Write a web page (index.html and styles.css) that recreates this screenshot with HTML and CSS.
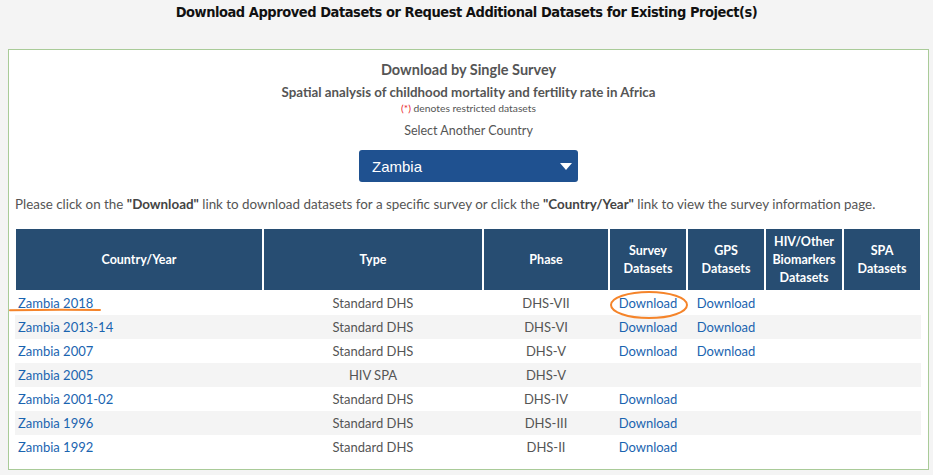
FILE: index.html
```html
<!DOCTYPE html>
<html>
<head>
<meta charset="utf-8">
<link rel="stylesheet" href="styles.css">
</head>
<body>
<h1 class="page-title">Download Approved Datasets or Request Additional Datasets for Existing Project(s)</h1>
<div class="panel">
  <h2 class="panel-title">Download by Single Survey</h2>
  <h3 class="project-title">Spatial analysis of childhood mortality and fertility rate in Africa</h3>
  <p class="restricted"><span class="star">(*)</span> denotes restricted datasets</p>
  <p class="select-label">Select Another Country</p>
  <div class="select-row">
    <div class="country-select">
      <span>Zambia</span>
      <svg class="caret" width="12" height="7" viewBox="0 0 12 7"><path d="M0 0H12L6 7Z" fill="#fff"/></svg>
    </div>
  </div>
  <p class="instructions">Please click on the <b>"Download"</b> link to download datasets for a specific survey or click the <b>"Country/Year"</b> link to view the survey information page.</p>
  <div class="table-wrap">
    <table class="surveys">
      <colgroup>
        <col class="c-country"><col class="c-type"><col class="c-phase"><col class="c-ds"><col class="c-ds"><col class="c-ds"><col class="c-ds">
      </colgroup>
      <thead>
        <tr>
          <th>Country/Year</th><th>Type</th><th>Phase</th><th>Survey<br>Datasets</th><th>GPS<br>Datasets</th><th>HIV/Other<br>Biomarkers<br>Datasets</th><th>SPA<br>Datasets</th>
        </tr>
      </thead>
      <tbody>
        <tr><td class="cy"><a>Zambia 2018</a></td><td>Standard DHS</td><td>DHS-VII</td><td><a>Download</a></td><td><a>Download</a></td><td></td><td></td></tr>
        <tr><td class="cy"><a>Zambia 2013-14</a></td><td>Standard DHS</td><td>DHS-VI</td><td><a>Download</a></td><td><a>Download</a></td><td></td><td></td></tr>
        <tr><td class="cy"><a>Zambia 2007</a></td><td>Standard DHS</td><td>DHS-V</td><td><a>Download</a></td><td><a>Download</a></td><td></td><td></td></tr>
        <tr><td class="cy"><a>Zambia 2005</a></td><td>HIV SPA</td><td>DHS-V</td><td></td><td></td><td></td><td></td></tr>
        <tr><td class="cy"><a>Zambia 2001-02</a></td><td>Standard DHS</td><td>DHS-IV</td><td><a>Download</a></td><td></td><td></td><td></td></tr>
        <tr><td class="cy"><a>Zambia 1996</a></td><td>Standard DHS</td><td>DHS-III</td><td><a>Download</a></td><td></td><td></td><td></td></tr>
        <tr><td class="cy"><a>Zambia 1992</a></td><td>Standard DHS</td><td>DHS-II</td><td><a>Download</a></td><td></td><td></td><td></td></tr>
      </tbody>
    </table>
    <svg class="mark mark-underline" width="92" height="4" viewBox="0 0 92 4"><path d="M1 2.2 Q46 1.4 91 2" stroke="#f5842a" stroke-width="2" fill="none" stroke-linecap="round"/></svg>
    <svg class="mark mark-ellipse" width="80" height="30" viewBox="0 0 80 30"><ellipse cx="40" cy="15" rx="38" ry="13" stroke="#f5842a" stroke-width="2" fill="none"/></svg>
  </div>
</div>
</body>
</html>
```

FILE: styles.css
```css
html, body {
  margin: 0;
  padding: 0;
  background: #f4f4f4;
}
body {
  font-family: Lato, "Open Sans", sans-serif;
  color: #555;
  width: 933px;
  height: 475px;
  overflow: hidden;
}
.page-title {
  margin: 0;
  padding-top: 3px;
  height: 46px;
  box-sizing: border-box;
  text-align: center;
  font-family: "DejaVu Sans Condensed", "DejaVu Sans", sans-serif;
  font-weight: bold;
  font-size: 14.5px;
  line-height: 18px;
  color: #111;
  letter-spacing: -0.45px;
}
.panel {
  margin: 3px 0 0 8px;
  width: 921px;
  height: 421px;
  box-sizing: border-box;
  border: 1px solid #a9cb98;
  background: #fff;
  padding: 11px 6px 0 6px;
  display: flex;
  flex-direction: column;
  align-items: stretch;
}
.panel-title {
  margin: 0;
  text-align: center;
  font-size: 14.5px;
  line-height: 18px;
  font-weight: bold;
  color: #555;
}
.project-title {
  margin: 5px 0 0;
  text-align: center;
  font-size: 13.3px;
  line-height: 16px;
  font-weight: bold;
  color: #555;
}
.restricted {
  margin: 1px 0 0;
  text-align: center;
  font-size: 10.3px;
  line-height: 14px;
  color: #555;
}
.star { color: #e8262e; }
.select-label {
  margin: 8px 0 0;
  text-align: center;
  font-size: 12.5px;
  line-height: 16px;
  color: #555;
}
.select-row {
  margin-top: 11px;
  display: flex;
  justify-content: center;
}
.country-select {
  width: 219px;
  height: 32px;
  box-sizing: border-box;
  background: #1f5190;
  border-radius: 3px;
  display: flex;
  align-items: center;
  justify-content: space-between;
  padding: 0 6px 0 13px;
  color: #fff;
  font-family: "Liberation Sans", Arial, sans-serif;
  font-size: 15px;
}
.caret { display: block; }
.instructions {
  margin: 13px 0 0;
  padding-left: 0;
  font-size: 13.4px;
  line-height: 18px;
  color: #555;
  white-space: nowrap;
}
.instructions b { color: #444; }
.table-wrap {
  position: relative;
  margin-top: 15px;
}
.surveys {
  width: 906px;
  border-collapse: separate;
  border-spacing: 0;
  table-layout: fixed;
  font-size: 13px;
}
.c-country { width: 248px; }
.c-type { width: 220px; }
.c-phase { width: 126px; }
.c-ds { width: 78px; }
.surveys th {
  background: #274d72;
  color: #fff;
  border: 1px solid #fff;
  font-weight: bold;
  font-size: 12.5px;
  line-height: 18px;
  height: 63px;
  padding: 0 2px;
  box-sizing: border-box;
  text-align: center;
  vertical-align: middle;
}
.surveys td {
  height: 24px;
  padding: 0 2px;
  text-align: center;
  vertical-align: middle;
  color: #555;
  line-height: 24px;
  white-space: nowrap;
}
.surveys td.cy { text-align: left; padding-left: 3px; }
.surveys tbody tr:nth-child(even) td { background: #f4f4f4; }
.surveys a { color: #1a64b0; }
.mark {
  position: absolute;
  display: block;
}
.mark-underline { left: -6px; top: 80px; }
.mark-ellipse { left: 594px; top: 62px; }
```
